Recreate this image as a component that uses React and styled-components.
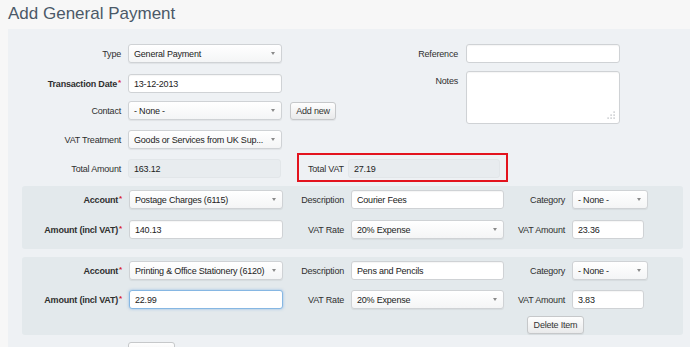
import React from 'react';
import styled, { createGlobalStyle, css } from 'styled-components';

const GlobalStyle = createGlobalStyle`
  html, body { margin: 0; padding: 0; background: #f7f7f7; }
  body {
    font-family: 'Liberation Sans', Arial, Helvetica, sans-serif;
    font-size: 9px;
    letter-spacing: -0.2px;
    color: #333;
    overflow: hidden;
  }
  * { box-sizing: border-box; }
`;

const Page = styled.div`
  width: 690px;
  height: 347px;
  overflow: hidden;
  background: #f7f7f7;
`;

const Header = styled.div`
  height: 29px;
  padding: 4px 0 0 8px;
`;

const Title = styled.h1`
  margin: 0;
  font-size: 17px;
  line-height: 20px;
  font-weight: normal;
  letter-spacing: 0;
  color: #4b5968;
`;

const Panel = styled.div`
  margin-left: 8px;
  background: #eef1f4;
  padding: 15px 0 20px 0;
`;

const Top = styled.div`
  display: flex;
`;

const Column = styled.div`
  display: flex;
  flex-direction: column;
  width: ${(p) => p.$w}px;
  flex-shrink: 0;
`;

const Row = styled.div`
  display: flex;
  align-items: ${(p) => (p.$top ? 'flex-start' : 'center')};
  margin-bottom: ${(p) => p.$mb || 0}px;
`;

const Label = styled.div`
  width: ${(p) => p.$w}px;
  flex-shrink: 0;
  text-align: ${(p) => (p.$left ? 'left' : 'right')};
  padding-right: ${(p) => (p.$pr != null ? p.$pr : 7)}px;
  padding-top: ${(p) => p.$pt || 0}px;
  font-weight: ${(p) => (p.$bold ? 'bold' : 'normal')};
  color: #2f2f2f;
  white-space: nowrap;
`;

const Req = styled.span`
  color: #d8232a;
  font-size: 8px;
  vertical-align: 2px;
  margin-left: 1px;
`;

const fieldBase = css`
  height: 19px;
  width: ${(p) => p.$w}px;
  flex-shrink: 0;
  border: 1px solid #cfd2d5;
  border-radius: 3px;
  padding: 0 5px;
  font-family: 'Liberation Sans', Arial, sans-serif;
  font-size: 9px;
  letter-spacing: -0.2px;
  color: #222;
`;

const Select = styled.div`
  ${fieldBase};
  display: flex;
  align-items: center;
  justify-content: space-between;
  background: linear-gradient(#ffffff, #f4f5f6);
  box-shadow: 0 1px 1px rgba(0, 0, 0, 0.06);
  white-space: nowrap;
  overflow: hidden;
`;

const Arrow = styled.span`
  width: 0;
  height: 0;
  border-left: 2.5px solid transparent;
  border-right: 2.5px solid transparent;
  border-top: 3px solid #8a8a8a;
  margin-right: 1px;
  flex-shrink: 0;
`;

const Input = styled.input`
  ${fieldBase};
  background: #fff;
  outline: none;
  box-shadow: inset 0 1px 1px rgba(0, 0, 0, 0.04);
  ${(p) =>
    p.$focus &&
    css`
      border-color: #86b7e3;
      box-shadow: 0 0 3px rgba(82, 150, 220, 0.55);
    `}
`;

const ReadOnly = styled.div`
  ${fieldBase};
  display: flex;
  align-items: center;
  background: #e8ecef;
  border-color: #e2e6e9;
`;

const Button = styled.button`
  height: 18px;
  padding: 0;
  border: 1px solid #c6c8ca;
  border-radius: 3px;
  background: linear-gradient(#fefefe, #e9eaeb);
  box-shadow: 0 1px 1px rgba(0, 0, 0, 0.06);
  font-family: 'Liberation Sans', Arial, sans-serif;
  font-size: 9px;
  letter-spacing: -0.2px;
  white-space: nowrap;
  color: #333;
  margin-left: ${(p) => p.$ml || 0}px;
  width: ${(p) => p.$w}px;
  cursor: pointer;
`;

const TextAreaWrap = styled.div`
  position: relative;
  width: 154px;
  height: 53px;
  border: 1px solid #cfd2d5;
  border-radius: 3px;
  background: #fff;
  box-shadow: inset 0 1px 1px rgba(0, 0, 0, 0.04);
`;

const Grip = styled.svg`
  position: absolute;
  right: 3px;
  bottom: 3px;
`;

const TotalsRow = styled.div`
  display: flex;
  align-items: flex-start;
  margin-top: 4px;
`;

const TotalsLeft = styled.div`
  display: flex;
  align-items: center;
  padding-top: 6px;
`;

const VatBox = styled.div`
  display: flex;
  align-items: center;
  margin-left: 16px;
  width: 211px;
  height: 29px;
  border: 2px solid #e3131e;
  padding: 2px 6px 0 9px;
`;

const Items = styled.div`
  margin: 4px 7px 0 14px;
  display: flex;
  flex-direction: column;
  gap: 8px;
`;

const Item = styled.div`
  background: #e3e9ec;
  border-radius: 3px;
  padding: 4px 0 ${(p) => p.$pb}px 0;
`;

const ButtonRow = styled.div`
  display: flex;
  padding-left: ${(p) => p.$pl}px;
`;

const Footer = styled.div`
  margin-top: 7px;
  padding-left: 120px;
`;

const items = [
  {
    account: 'Postage Charges (6115)',
    description: 'Courier Fees',
    amount: '140.13',
    vatAmount: '23.36',
    focus: false,
    last: false,
  },
  {
    account: 'Printing & Office Stationery (6120)',
    description: 'Pens and Pencils',
    amount: '22.99',
    vatAmount: '3.83',
    focus: true,
    last: true,
  },
];

function GripDots() {
  const dots = [
    [7, 1],
    [4, 4],
    [7, 4],
    [1, 7],
    [4, 7],
    [7, 7],
  ];
  return (
    <Grip width="9" height="9" viewBox="0 0 9 9">
      {dots.map(([x, y], i) => (
        <rect key={i} x={x - 0.5} y={y - 0.5} width="1.2" height="1.2" fill="#a9adb1" />
      ))}
    </Grip>
  );
}

function LineItem({ it }) {
  return (
    <Item $pb={it.last ? 1 : 10}>
      <Row $mb={it.last ? 10 : 11}>
        <Label $w={107} $bold>
          Account<Req>*</Req>
        </Label>
        <Select $w={154}>
          <span>{it.account}</span>
          <Arrow />
        </Select>
        <Label $w={68}>Description</Label>
        <Input $w={153} defaultValue={it.description} />
        <Label $w={68}>Category</Label>
        <Select $w={76}>
          <span>- None -</span>
          <Arrow />
        </Select>
      </Row>
      <Row $mb={it.last ? 7 : 0}>
        <Label $w={107} $bold>
          Amount (incl VAT)<Req>*</Req>
        </Label>
        <Input $w={154} defaultValue={it.amount} $focus={it.focus} />
        <Label $w={68}>VAT Rate</Label>
        <Select $w={153}>
          <span>20% Expense</span>
          <Arrow />
        </Select>
        <Label $w={68}>VAT Amount</Label>
        <Input $w={72} defaultValue={it.vatAmount} />
      </Row>
      {it.last && (
        <ButtonRow $pl={505}>
          <Button $w={57}>Delete Item</Button>
        </ButtonRow>
      )}
    </Item>
  );
}

export default function App() {
  return (
    <Page>
      <GlobalStyle />
      <Header>
        <Title>Add General Payment</Title>
      </Header>
      <Panel>
        <Top>
          <Column $w={328}>
            <Row $mb={11}>
              <Label $w={120}>Type</Label>
              <Select $w={154}>
                <span>General Payment</span>
                <Arrow />
              </Select>
            </Row>
            <Row $mb={8}>
              <Label $w={120} $bold>
                Transaction Date<Req>*</Req>
              </Label>
              <Input $w={154} defaultValue="13-12-2013" />
            </Row>
            <Row $mb={10}>
              <Label $w={120}>Contact</Label>
              <Select $w={154}>
                <span>- None -</span>
                <Arrow />
              </Select>
              <Button $ml={8} $w={46}>
                Add new
              </Button>
            </Row>
            <Row>
              <Label $w={120}>VAT Treatment</Label>
              <Select $w={154}>
                <span>Goods or Services from UK Sup...</span>
                <Arrow />
              </Select>
            </Row>
          </Column>
          <Column $w={290}>
            <Row $mb={8}>
              <Label $w={130} $pr={8}>
                Reference
              </Label>
              <Input $w={154} defaultValue="" />
            </Row>
            <Row $top>
              <Label $w={130} $pr={8} $pt={5}>
                Notes
              </Label>
              <TextAreaWrap>
                <GripDots />
              </TextAreaWrap>
            </Row>
          </Column>
        </Top>
        <TotalsRow>
          <TotalsLeft>
            <Label $w={120}>Total Amount</Label>
            <ReadOnly $w={153}>163.12</ReadOnly>
          </TotalsLeft>
          <VatBox>
            <Label $w={40} $pr={0} $left>
              Total VAT
            </Label>
            <ReadOnly $w={152}>27.19</ReadOnly>
          </VatBox>
        </TotalsRow>
        <Items>
          {items.map((it, i) => (
            <LineItem key={i} it={it} />
          ))}
        </Items>
        <Footer>
          <Button $w={47} aria-label="Add item" />
        </Footer>
      </Panel>
    </Page>
  );
}
